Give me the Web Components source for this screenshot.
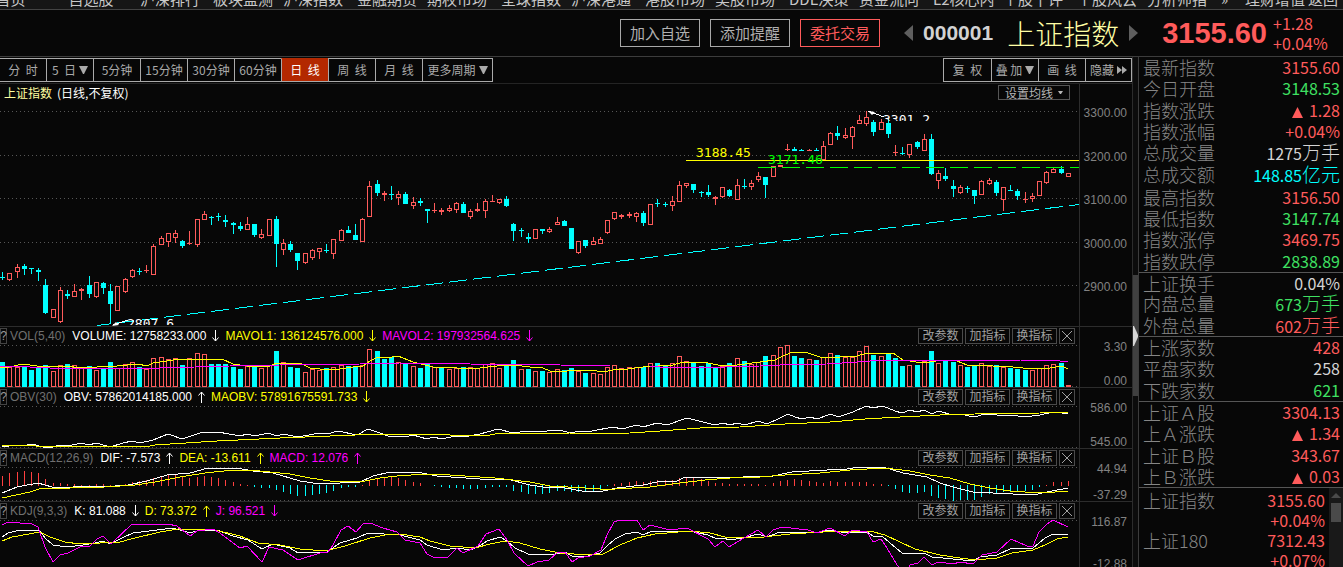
<!DOCTYPE html>
<html lang="zh-CN">
<head>
<meta charset="utf-8">
<title>上证指数 000001</title>
<style>
  html, body { margin: 0; height: 100%; background: #070707; overflow: hidden; }
  body {
    --line: #3c3c3c; --faint: #262626; --up: #ff5b5b; --down: #3fe062; --dim: #828282; --text: #b4b4b4;
    color: var(--text);
    font: 12px/16px "Liberation Sans", "Noto Sans CJK SC", sans-serif;
  }
</style>
</head>
<body>
<stock-app></stock-app>

<template id="t-app">
  <style>
    :host { display: flex; flex-direction: column; min-height: 100%; }
    main { display: flex; align-items: stretch; }
    .charts { flex: 1; min-width: 0; }
    .side { width: 204px; border-left: 1px solid var(--line); }
  </style>
  <site-nav></site-nav>
  <quote-header></quote-header>
  <main>
    <div class="charts">
      <period-bar></period-bar>
      <price-chart></price-chart>
      <indicator-panel kind="vol"></indicator-panel>
      <indicator-panel kind="obv"></indicator-panel>
      <indicator-panel kind="macd"></indicator-panel>
      <indicator-panel kind="kdj"></indicator-panel>
    </div>
    <side-splitter></side-splitter>
    <div class="side">
      <quote-board></quote-board>
      <index-list></index-list>
    </div>
  </main>
</template>

<template id="t-nav">
  <style>
    :host { display: block; background: #161616; border-bottom: 1px solid #444; }
    nav { display: flex; align-items: flex-end; height: 9px; overflow: hidden; }
    a { flex: none; width: 72px; text-align: center; white-space: nowrap; text-decoration: none;
        color: #c8c8c8; font: 15px/20px "Noto Sans CJK SC", sans-serif; }
    a.home { width: 55px; text-indent: -34px; }
    a.more { width: 24px; text-align: left; }
    a.last { width: 36px; padding-right: 4px; }
    i { flex: 1; }
  </style>
  <nav>
    <a class="home" href="#">首页</a><a href="#">自选股</a>
    <a href="#" style="width:86px">沪深排行</a><a href="#" style="width:56px">板块监测</a><a href="#" style="width:88px">沪深指数</a><a href="#" style="width:56px">金融期货</a>
    <a href="#" style="width:88px">期权市场</a><a href="#" style="width:56px">全球指数</a><a href="#" style="width:88px">沪深港通</a><a href="#" style="width:56px">港股市场</a>
    <a href="#" style="width:88px">美股市场</a><a href="#" style="width:56px">DDE决策</a><a href="#" style="width:88px">资金流向</a><a href="#" style="width:56px">L2核心内</a>
    <a href="#" style="width:88px">个股千评</a><a href="#" style="width:56px">个股风云</a><a href="#" style="width:88px">分析师指</a><a class="more" href="#">»</a>
    <i></i><a href="#" style="width:60px">理财增值</a><a class="last" href="#">返回</a>
  </nav>
</template>

<template id="t-header">
  <style>
    :host { display: flex; justify-content: flex-end; align-items: center; height: 46px; border-bottom: 1px solid var(--line); }
    .act { width: 80px; height: 28px; padding: 0; margin-right: 10px; background: none; border: 1px solid #a8a8a8; color: #b0b0b0;
           font: 15px/22px "Noto Sans CJK SC", sans-serif; }
    .hot { color: var(--up); border-color: var(--up); margin-right: 24px; }
    .step { width: 10px; height: 16px; padding: 0; border: 0; background: none; }
    svg { display: block; }
    .code { margin: 0 14px 0 9px; font: bold 21px/24px "Liberation Sans", sans-serif; color: #d2d2d2; }
    h1 { margin: 0 9px 0 0; font: 28px/36px "Noto Sans CJK SC", sans-serif; font-weight: 300; color: #ffffa5; }
    .price { margin: 0 6px 0 24px; font: bold 29px/32px "Liberation Sans", sans-serif; color: var(--up); }
    .chg { width: 70px; font: 16px/20px "Noto Sans CJK SC", sans-serif; color: var(--up); }
  </style>
  <button class="act">加入自选</button><button class="act">添加提醒</button><button class="act hot">委托交易</button>
  <button class="step" aria-label="prev"><svg width="10" height="16"><path d="M9 0V16L0 8Z" fill="#5e5e5e"/></svg></button>
  <span class="code">000001</span>
  <h1>上证指数</h1>
  <button class="step" aria-label="next"><svg width="10" height="16"><path d="M1 0V16L10 8Z" fill="#5e5e5e"/></svg></button>
  <span class="price">3155.60</span>
  <div class="chg">+1.28<br>+0.04%</div>
</template>

<template id="t-period">
  <style>
    :host { display: flex; align-items: flex-start; height: 25px; padding-top: 1px; border-bottom: 1px solid #242424; }
    button { width: 48px; height: 24px; margin: 0 0 0 -1px; padding: 0; border: 1px solid #aaa; background: none; color: #aaa;
             white-space: nowrap; font: 12px/22px "Noto Sans CJK SC", sans-serif; display: flex; align-items: center; justify-content: center; gap: 3px; }
    .on { background: #b32800; color: #fff; border-color: #b32800 #aaa #aaa; border-left-color: #aaa; }
    .wide { width: 71px; }
    i { flex: 1; }
  </style>
  <button>分&nbsp; 时</button><button>5&nbsp; 日<svg width="9" height="8"><path d="M0 0H9L5 8H4Z" fill="#aaa"/></svg></button><button>5分钟</button><button>15分钟</button><button>30分钟</button><button>60分钟</button><button class="on">日&nbsp; 线</button><button>周&nbsp; 线</button><button>月&nbsp; 线</button><button class="wide">更多周期<svg width="9" height="8"><path d="M0 0H9L5 8H4Z" fill="#aaa"/></svg></button>
  <i></i>
  <button style="width:49px">复&nbsp; 权</button><button>叠&nbsp;加<svg width="9" height="8"><path d="M0 0H9L5 8H4Z" fill="#aaa"/></svg></button><button>画&nbsp; 线</button><button style="width:47px">隐藏<svg width="10" height="8"><path d="M0 0L5 4L0 8ZM5 0L10 4L5 8Z" fill="#aaa"/></svg></button>
</template>

<template id="t-price">
  <style>
    :host { display: grid; grid-template-columns: 1fr 52px; height: 242px; }
    .plot { position: relative; min-width: 0; }
    .plot > svg { display: block; width: 100%; height: 242px; }
    .axis { box-sizing: border-box; display: flex; flex-direction: column; justify-content: space-between; border-left: 1px solid #2c2c2c;
            padding: 22px 5px 31px 0; text-align: right; color: var(--dim); line-height: 15px; margin-left: -1px; }
    .head { position: absolute; left: 4px; right: 10px; top: 1px; display: flex; justify-content: space-between;
            font: 12px/16px "Noto Sans CJK SC", sans-serif; color: #fff; }
    .head b { font-weight: 400; color: #ffffa0; margin-right: 5px; }
    button { display: flex; align-items: center; justify-content: center; gap: 5px; box-sizing: border-box; width: 72px; height: 15px; padding: 0;
             border: 1px solid #555; background: none; color: #b4b4b4; font: 12px/13px "Noto Sans CJK SC", sans-serif; }
    text { font: 13px "DejaVu Sans Mono", monospace; }
  </style>
  <div class="plot">
    <svg id="s" viewBox="0 84 1080 242" preserveAspectRatio="none"></svg>
    <div class="head"><span><b>上证指数</b>(日线,不复权)</span>
      <button>设置均线<svg width="5" height="3"><path d="M0 0H5L3 3H2Z" fill="#b4b4b4"/></svg></button></div>
  </div>
  <div class="axis"><span>3300.00</span><span>3200.00</span><span>3100.00</span><span>3000.00</span><span>2900.00</span></div>
</template>

<template id="t-ind">
  <style>
    :host { display: grid; grid-template-columns: 1fr 52px; height: var(--h); border-top: 1px solid #2c2c2c; }
    .plot { position: relative; min-width: 0; }
    .plot > svg { display: block; width: 100%; height: var(--h); }
    .axis { box-sizing: border-box; display: flex; flex-direction: column; justify-content: space-between; border-left: 1px solid #2c2c2c;
            padding: 14px 5px 0 0; text-align: right; color: var(--dim); line-height: 12px; margin-left: -1px; }
    .head { position: absolute; left: 0; right: 5px; top: 1px; display: flex; align-items: center; gap: 6px; height: 16px; white-space: nowrap; }
    .head svg { display: block; flex: none; }
    .help { box-sizing: border-box; width: 7px; height: 16px; padding: 0; border: 1px solid #444; background: none; color: #999; font: 12px/14px "Liberation Sans", sans-serif; display: flex; justify-content: center; }
    .name { color: #707070; margin: 0 1px 0 -3px; }
    .gap { flex: 1; }
    .op { box-sizing: border-box; width: 45px; height: 16px; margin-left: -4px; padding: 0 0 2px; border: 1px solid #4a4a4a; background: none; color: #a0a0a0;
          font: 12px/12px "Noto Sans CJK SC", sans-serif; }
    .x { width: 16px; padding: 0; display: flex; align-items: center; justify-content: center; }
  </style>
  <div class="plot"><svg id="s" preserveAspectRatio="none"></svg>
    <div class="head" id="head"></div></div>
  <div class="axis" id="axis"></div>
</template>

<template id="t-split">
  <style>
    :host { display: block; width: 5px; flex: none; border-left: 1px solid #2c2c2c; background: #0c0c0c; }
    button { display: flex; align-items: center; margin: 218px 0 0; padding: 0; width: 5px; height: 121px; border: 0; background: #404040; }
  </style>
  <button aria-label="toggle side panel"><svg width="5" height="20"><path d="M0 0H1L5 9V11L1 20H0Z" fill="#d8d8d8"/></svg></button>
</template>

<template id="t-board">
  <style>
    :host { display: block; }
    section { border-bottom: 1px solid #555; }
    table { width: 100%; height: 100%; border-spacing: 0; }
    th, td { padding: 0; vertical-align: top; line-height: 20px; font-family: "Noto Sans CJK SC", sans-serif; white-space: nowrap; }
    th { padding-left: 4px; text-align: left; font-size: 18px; font-weight: 300; color: #868686; }
    td { padding-right: 3px; text-align: right; font-size: 16px; }
    em { font-style: normal; font-size: 19px; font-weight: 300; }
    .r { color: var(--up); } .g { color: var(--down); } .w { color: #d4d4d4; } .c { color: #00ffff; }
    svg { margin-right: 6px; vertical-align: -1px; }
  </style>
  <div id="out"></div>
</template>

<template id="t-list">
  <style>
    :host { display: flex; align-items: flex-start; height: 90px; overflow: hidden; }
    table { flex: 1; border-collapse: collapse; margin-top: 2px; }
    th, td { padding: 0; height: 20px; line-height: 20px; font-family: "Noto Sans CJK SC", sans-serif; font-weight: 400; }
    th { padding-left: 4px; text-align: left; font-size: 18px; font-weight: 300; color: #868686; }
    td { padding-right: 4px; text-align: right; font-size: 16px; color: var(--up); }
    .bar { width: 14px; height: 90px; background: #191919; display: flex; flex-direction: column; align-items: center; gap: 5px; padding-top: 5px; box-sizing: border-box; }
    .bar i { width: 10px; height: 19px; background: #4a4a4a; }
    svg { display: block; }
  </style>
  <table>
    <tr><th scope="row">上证指数</th><td>3155.60</td></tr><tr><th></th><td>+0.04%</td></tr>
    <tr><th scope="row">上证180</th><td>7312.43</td></tr><tr><th></th><td>+0.07%</td></tr>
  </table>
  <div class="bar"><svg width="10" height="5"><path d="M5 0L10 5H0Z" fill="#4a4a4a"/></svg><i></i></div>
</template>

<script>
const RED = '#ff5b5b', CYAN = '#00ffff', YEL = '#ffff00', MAG = '#ff00ff', WHT = '#ffffff';
const xAt = i => Math.floor(2.7 + 7.2 * i);
const rect = (x, y, w, h, c) => `<rect x="${x}" y="${y}" width="${w}" height="${h}" fill="${c}"/>`;
const box = (x, y, w, h, c) => h < 3 ? rect(x, y, w, Math.max(h, 1), c)
  : `<rect x="${x + .5}" y="${y + .5}" width="${w - 1}" height="${h - 1}" fill="#070707" stroke="${c}"/>`;
const dots = y => `<path d="M0 ${y}.5H1079" stroke="#565656" stroke-dasharray="1 3"/>`;
const line = (pts, c) => `<polyline points="${pts}" fill="none" stroke="${c}" shape-rendering="crispEdges"/>`;

/* colour, high, body top, body bottom, low: rows below the 3330 level */
const CANDLES = `c172,177,178,180 r173,173,180,181 r164,167,172,178 c164,166,169,175 c168,168,169,174 c168,170,172,181 c179,185,213,214 r209,209,218,218 r187,190,222,223 c190,194,196,199
r184,191,197,197 r188,189,191,200 c176,185,194,198 r182,182,197,198 c182,183,188,194 c184,191,204,224 r186,186,211,211 r178,179,192,193 r169,170,177,178 c168,171,172,175
r165,170,171,173 r144,146,175,175 r136,138,145,145 r133,133,142,147 r130,133,138,143 c140,141,146,148 r131,143,144,145 r119,119,145,147 r111,114,120,120 c116,117,118,125
c113,116,117,121 c115,120,122,127 c122,123,125,134 c122,126,129,131 r117,124,130,130 c124,124,135,137 r129,134,138,139 r119,119,136,136 c116,119,144,167 r139,143,150,155
c141,144,150,152 c153,153,161,170 r153,153,163,164 r149,150,158,160 r148,148,152,159 c144,150,151,153 r139,139,154,159 r129,130,141,141 c126,130,133,133 c124,135,140,140
r118,119,142,142 r81,86,117,117 c80,84,93,96 r91,93,95,101 c86,94,95,100 r91,94,98,105 c92,94,104,104 r97,102,106,109 c98,101,103,106 c109,109,111,123
r103,110,111,113 r108,110,112,115 r105,108,111,112 r102,103,110,113 c102,104,113,113 r109,111,117,119 r103,109,111,112 r99,101,111,118 r95,101,102,102 r99,99,103,104
c96,99,106,107 c123,124,131,141 c128,130,131,137 c133,137,139,143 r129,129,139,139 c129,129,131,134 r127,129,132,133 r117,122,125,125 c120,121,126,126 c128,128,149,149
r141,141,153,154 c140,140,146,148 r137,141,145,145 r137,139,144,144 r120,120,133,134 r112,112,119,120 r114,115,117,119 r112,114,116,118 r112,113,117,122 c111,113,123,126
r104,104,125,125 c99,103,104,107 c102,104,105,107 r96,101,106,111 r81,85,102,102 r83,83,86,88 c84,84,90,93 c91,92,93,97 c85,92,95,97 r96,97,99,105
r87,87,97,98 c89,90,96,97 r79,85,100,100 c79,86,87,89 r80,83,87,90 r72,76,80,82 c77,77,85,98 r66,66,77,77 r65,65,67,67 r44,49,50,51
c47,49,51,51 c49,50,51,51 r49,50,51,51 c48,50,51,51 r41,46,60,60 r32,33,45,45 c26,33,36,40 r28,35,38,39 r26,27,37,49 r15,20,24,24
r11,17,24,26 c20,22,32,36 r19,22,30,30 c19,23,34,38 r45,52,53,56 c47,53,54,55 r44,44,55,58 c41,42,47,49 r34,39,51,51 c34,39,74,75
r70,73,81,89 c68,76,79,81 c80,86,89,97 r85,87,93,94 c86,88,89,93 c90,90,96,104 r80,81,95,95 r78,80,84,85 c80,82,93,96 r87,87,100,111
c85,90,91,91 c89,91,96,100 r92,99,100,103 r93,96,99,102 r81,81,96,96 r71,72,83,84 r68,69,73,73 c66,69,73,74 r73,73,77,77`
  .split(/\s+/).map(s => ({ c: s[0], v: s.slice(1).split(',').map(Number) }));

/* height of each volume bar, in rows */
const VOL = [25,20,20,20,17,20,22,16,22,23,22,19,21,17,19,25,19,23,25,20,18,29,30,28,29,22,29,34,33,23,23,23,20,18,21,21,19,22,36,25,20,19,15,18,17,19,20,22,21,21,
22,38,36,28,30,25,24,21,19,23,20,19,18,19,20,20,19,23,24,19,21,27,18,18,16,16,15,18,17,19,16,14,14,13,20,22,19,20,20,20,24,24,21,24,31,26,25,21,24,20,
21,24,29,26,23,25,31,32,40,42,31,29,28,27,30,34,32,30,30,36,41,32,31,34,29,21,22,22,26,36,24,27,25,22,20,21,24,21,22,20,19,18,17,17,19,22,23,24,2];
const VOL_CYAN = new Set([53, 61, 99, 124, 142]), VOL_RED = new Set([72]);

const HIST = [10,13,14,15,14,13,7,3,3,2,2,1,1,2,2,1,1,2,4,5,6,8,10,12,12,10,8,9,10,9,8,6,4,2,1,-2,-3,-3,-5,-7,-9,-11,-11,-10,-9,-8,-6,-3,-2,-2,
1,6,7,8,9,8,6,4,3,0,-1,-2,-3,-3,-4,-4,-4,-3,-2,-2,-2,-6,-7,-9,-9,-9,-8,-6,-6,-7,-7,-7,-6,-5,-1,2,3,4,5,4,5,6,6,6,8,9,8,7,5,3,
3,2,2,2,2,2,1,3,5,6,7,6,5,4,3,5,4,4,4,4,4,2,2,-1,-4,-7,-8,-8,-7,-11,-13,-14,-16,-15,-15,-15,-12,-9,-9,-7,-6,-6,-6,-5,-2,1,4,4,5];

const L = {
  mavol1: '0,368 9,367 23,364 37,366 67,366 80,368 97,367 117,366 138,364 147,366 153,363 167,361 180,359 222,359 233,364 247,366 267,367 277,363 302,364 310,368 320,369 340,369 353,367 363,366 370,361 378,357 387,358 398,356 413,362 433,367 457,368 480,368 497,366 513,365 530,367 543,368 550,371 567,371 590,370 603,372 613,370 628,369 643,367 673,365 683,362 703,362 723,366 737,365 760,362 775,360 785,355 793,352 808,353 823,358 857,356 867,353 893,353 903,360 923,363 943,360 957,361 967,365 993,366 1013,367 1033,369 1050,368 1062,366 1068,369',
  mavol2: '0,366 30,367 50,368 160,368 195,367 230,366 280,365 360,364 400,363 450,363 470,364 560,365 610,366 650,366 660,367 725,367 760,366 780,365 827,364 857,362 883,360 1020,360 1060,361 1068,361',
  obv: '2,447 17,445 23,446 32,444 43,447 53,447 60,445 67,446 82,443 88,445 97,443 103,445 110,447 123,443 132,441 140,443 153,440 168,434 182,439 203,432 212,433 218,432 240,436 247,434 255,436 268,433 277,436 283,434 298,437 320,433 327,434 338,431 357,435 368,429 380,433 391,437 398,436 405,437 413,435 427,439 433,437 442,439 455,436 463,437 480,434 498,429 513,433 527,431 537,432 558,430 572,433 578,431 587,432 613,427 622,429 637,425 643,427 657,423 667,425 687,418 715,425 723,423 730,425 737,423 745,425 758,421 767,424 780,418 788,414 795,417 802,419 810,417 817,419 831,414 838,417 853,412 866,406 873,408 882,406 888,408 895,411 902,413 910,410 917,412 924,410 932,414 938,411 953,415 960,414 974,417 985,414 997,415 1010,415 1025,417 1040,415 1053,412 1062,413 1068,413',
  maobv: '2,445 30,445 36,446 150,446 155,445 217,441 280,438 330,436 380,434 445,434 450,435 490,435 495,434 570,433 590,434 630,433 660,431 700,428 740,427 785,424 830,422 865,419 900,417 940,415 975,414 1040,413 1068,412',
  dif: '2,493 17,487 38,483 52,487 73,487 115,486 128,485 147,481 167,475 190,473 208,468 237,468 253,471 273,473 300,481 320,484 340,483 360,482 373,476 390,472 417,472 437,476 480,479 507,479 530,485 550,488 560,487 587,492 603,491 617,488 643,485 657,482 677,481 685,477 743,477 773,476 792,472 827,470 847,469 860,467 883,467 903,473 927,477 940,483 953,487 973,492 993,493 1033,495 1047,492 1068,488',
  dea: '2,498 30,492 42,488 70,488 105,487 135,485 155,482 180,477 205,473 233,470 260,471 290,474 310,478 330,481 365,481 380,478 397,476 425,474 450,475 495,478 530,482 550,486 585,488 600,489 615,489 650,487 680,483 705,480 730,478 760,477 785,475 820,473 850,470 885,468 910,471 930,475 950,478 970,484 990,488 1010,491 1040,493 1055,492 1068,491',
  k: '2,537 8,533 20,530 40,531 45,538 53,545 67,547 83,545 95,543 103,541 110,544 122,538 133,533 157,530 173,528 190,533 200,530 217,530 233,536 248,540 262,549 273,544 290,548 298,553 327,552 340,543 357,538 368,533 400,535 420,540 427,545 443,550 457,548 470,550 478,547 487,541 500,537 507,541 515,548 528,554 550,555 565,552 572,556 588,556 600,553 607,546 615,539 625,534 637,532 643,535 652,531 690,531 708,535 717,539 723,538 730,540 743,538 758,534 767,537 780,532 820,532 830,530 847,533 867,532 873,536 882,536 890,543 902,553 917,554 924,553 932,557 953,559 973,561 980,557 997,555 1012,548 1033,548 1045,538 1053,534 1068,534',
  d: '2,541 12,537 40,532 50,537 65,542 80,544 120,542 135,538 160,532 178,529 215,530 240,536 258,543 280,545 300,549 325,551 345,546 370,538 390,534 400,534 420,537 430,541 450,546 475,548 490,544 505,541 520,543 540,549 560,553 588,555 603,554 620,545 637,538 655,534 690,531 710,533 725,537 755,538 790,534 840,531 870,531 885,535 900,542 915,549 940,555 960,558 975,560 997,558 1012,553 1033,550 1045,545 1057,539 1068,537',
  j: '2,525 8,522 32,524 38,527 45,547 53,562 60,555 68,553 80,547 90,546 97,539 103,536 111,544 132,524 168,524 177,526 190,536 197,531 213,529 220,533 240,548 247,546 262,562 269,547 283,550 298,560 320,553 328,552 333,545 341,530 348,526 356,532 363,524 370,523 383,528 397,532 405,540 420,543 427,554 435,558 448,557 457,548 463,553 478,546 486,534 499,529 507,540 514,553 528,566 537,562 549,560 557,553 565,552 572,562 578,558 590,556 601,550 607,535 614,522 620,520 637,520 643,530 650,525 670,530 687,528 708,539 715,547 723,541 729,547 737,542 758,530 766,537 773,530 782,527 808,530 817,533 830,528 845,536 852,530 867,532 873,542 881,539 887,548 897,565 901,569 908,569 910,565 918,563 924,557 932,565 938,562 953,564 960,562 973,564 982,555 997,552 1011,539 1027,546 1033,546 1039,532 1047,524 1053,520 1068,527'
};

function drawPrice() {
  let s = [111, 155, 198, 242, 285].map(dots).join('');
  CANDLES.forEach(({ c, v: [hi, t, b, lo] }, i) => {
    const x = xAt(i), col = c === 'r' ? RED : CYAN;
    s += rect(x, 100 + hi, 1, Math.max(lo - hi, 1), col);
    s += c === 'r' ? box(x - 2, 100 + t, 5, b - t, col) : rect(x - 2, 100 + t, 5, b - t, col);
  });
  s += `<path d="M97 325.5L1079 204.5" stroke="${CYAN}" stroke-dasharray="18 6" stroke-dashoffset="5" shape-rendering="crispEdges"/>
    <path d="M686 160.5H1079" stroke="${YEL}"/>
    <path d="M758 167.5H1079" stroke="#00ff00" stroke-dasharray="18 6"/>
    <text x="696" y="157" fill="${YEL}">3188.45</text>
    <text x="768" y="164" fill="#00ff00">3171.46</text>
    <svg x="880" y="112" width="60" height="9" viewBox="880 112 60 9"><text x="883" y="124" fill="#fff">3301.2</text></svg>
    <svg x="124" y="314" width="60" height="11" viewBox="124 314 60 11"><text x="127" y="328" fill="#fff">2807.6</text></svg>
    <path d="M868 111L884 117M128 320L113 325" stroke="#fff" shape-rendering="crispEdges"/>
    <path d="M868 111L875 112L872 115ZM112 326L116 322L119 325Z" fill="#fff"/>`;
  return s;
}

const PANELS = {
  vol: { top: 327, h: 60, name: 'VOL(5,40)', axis: ['3.30', '0.00'],
    items: [['VOLUME: 12758233.000', WHT, 0], ['MAVOL1: 136124576.000', YEL, 0], ['MAVOL2: 197932564.625', MAG, 0]],
    draw: () => dots(345) + dots(386) + VOL.map((h, i) => {
      const cyan = VOL_CYAN.has(i) || (CANDLES[i].c === 'c' && !VOL_RED.has(i));
      return cyan ? rect(xAt(i) - 2, 387 - h, 5, h, CYAN) : box(xAt(i) - 2, 387 - h, 5, h, RED);
    }).join('') + line(L.mavol1, YEL) + line(L.mavol2, MAG) },
  obv: { top: 388, h: 60, name: 'OBV(30)', axis: ['586.00', '545.00'],
    items: [['OBV: 57862014185.000', WHT, 1], ['MAOBV: 57891675591.733', YEL, 0]],
    draw: () => dots(406) + dots(447) + line(L.obv, WHT) + line(L.maobv, YEL) },
  macd: { top: 449, h: 52, name: 'MACD(12,26,9)', axis: ['44.94', '-37.29'],
    items: [['DIF: -7.573', WHT, 1], ['DEA: -13.611', YEL, 1], ['MACD: 12.076', MAG, 1]],
    draw: () => dots(467) + dots(500) + HIST.map((h, i) => h > 0 ? rect(xAt(i), 486 - h, 1, h, '#ff4040') : rect(xAt(i), 485, 1, -h, CYAN)).join('')
      + line(L.dif, WHT) + line(L.dea, YEL) },
  kdj: { top: 502, h: 68, name: 'KDJ(9,3,3)', axis: ['116.87', '-12.88'],
    items: [['K: 81.088', WHT, 0], ['D: 73.372', YEL, 1], ['J: 96.521', MAG, 0]],
    draw: () => dots(520) + line(L.k, WHT) + line(L.d, YEL) + line(L.j, MAG) }
};
const arrow = (c, up) => `<svg width="7" height="12"><path d="${up ? 'M3.5 12V1M.5 4.500L3.500 1L6.500 4.500' : 'M3.5 0V11M.5 7.500L3.500 11L6.500 7.500'}" fill="none" stroke="${c}"/></svg>`;

class Base extends HTMLElement {
  constructor(id) { super(); this.attachShadow({ mode: 'open' }).append(document.getElementById(id).content.cloneNode(true)); }
  $(id) { return this.shadowRoot.getElementById(id); }
}
const simple = (tag, id) => customElements.define(tag, class extends Base { constructor() { super(id); } });
simple('site-nav', 't-nav');
simple('quote-header', 't-header');
simple('period-bar', 't-period');
simple('side-splitter', 't-split');
simple('index-list', 't-list');

customElements.define('price-chart', class extends Base {
  constructor() { super('t-price'); this.$('s').innerHTML = drawPrice(); }
});

customElements.define('indicator-panel', class extends Base {
  constructor() { super('t-ind'); }
  connectedCallback() {
    const p = PANELS[this.getAttribute('kind')];
    this.style.setProperty('--h', p.h + 'px');
    this.$('s').setAttribute('viewBox', `0 ${p.top} 1080 ${p.h}`);
    this.$('s').innerHTML = p.draw();
    this.$('axis').innerHTML = p.axis.map(a => `<span>${a}</span>`).join('');
    this.$('head').innerHTML = `<button class="help">?</button><span class="name">${p.name}</span>`
      + p.items.map(([t, c, up]) => `<span style="color:${c}">${t}</span>${arrow(c, up)}`).join('')
      + `<span class="gap"></span><button class="op">改参数</button><button class="op">加指标</button><button class="op">换指标</button>
         <button class="op x" aria-label="close"><svg width="10" height="10"><path d="M0 0L10 10M10 0L0 10" stroke="#a0a0a0"/></svg></button>`;
  }
});

const TRI = '<svg width="11" height="11"><path d="M5.500 0L11 11H0Z" fill="#ff5b5b"/></svg>';
const BOARD = [
  [215, [['最新指数', '3155.60', 'r'], ['今日开盘', '3148.53', 'g'], ['指数涨跌', TRI + '1.28', 'r'], ['指数涨幅', '+0.04%', 'r'],
    ['总成交量', '1275<em>万手</em>', 'w'], ['总成交额', '148.85<em>亿元</em>', 'c'], ['最高指数', '3156.50', 'r'], ['最低指数', '3147.74', 'g'],
    ['指数涨停', '3469.75', 'r'], ['指数跌停', '2838.89', 'g']]],
  [63, [['上证换手', '0.04%', 'w'], ['内盘总量', '673<em>万手</em>', 'g'], ['外盘总量', '602<em>万手</em>', 'r']]],
  [64, [['上涨家数', '428', 'r'], ['平盘家数', '258', 'w'], ['下跌家数', '621', 'g']]],
  [85, [['上证Ａ股', '3304.13', 'r'], ['上Ａ涨跌', TRI + '1.34', 'r'], ['上证Ｂ股', '343.67', 'r'], ['上Ｂ涨跌', TRI + '0.03', 'r']]]
];
customElements.define('quote-board', class extends Base {
  constructor() {
    super('t-board');
    this.$('out').innerHTML = BOARD.map(([h, rows]) => `<section style="height:${h}px"><table>`
      + rows.map(([k, v, c]) => `<tr><th scope="row">${k}</th><td class="${c}">${v}</td></tr>`).join('') + '</table></section>').join('');
  }
});
simple('stock-app', 't-app');
</script>
</body>
</html>
